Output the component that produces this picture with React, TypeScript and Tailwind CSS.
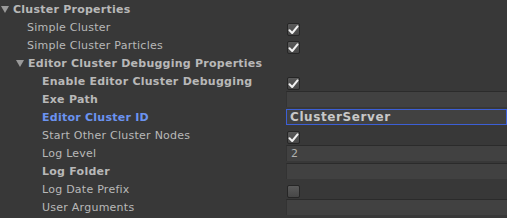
import React from "react"

type Row = {
  label: string
  indent: number
  bold?: boolean
  foldout?: boolean
  focused?: boolean
  kind?: "check" | "uncheck" | "text" | "none"
  value?: string
}

const rows: Row[] = [
  { label: "Cluster Properties", indent: 0, bold: true, foldout: true, kind: "none" },
  { label: "Simple Cluster", indent: 1, kind: "check" },
  { label: "Simple Cluster Particles", indent: 1, kind: "check" },
  { label: "Editor Cluster Debugging Properties", indent: 1, bold: true, foldout: true, kind: "none" },
  { label: "Enable Editor Cluster Debugging", indent: 2, bold: true, kind: "check" },
  { label: "Exe Path", indent: 2, bold: true, kind: "text", value: "" },
  { label: "Editor Cluster ID", indent: 2, bold: true, focused: true, kind: "text", value: "ClusterServer" },
  { label: "Start Other Cluster Nodes", indent: 2, kind: "check" },
  { label: "Log Level", indent: 2, kind: "text", value: "2" },
  { label: "Log Folder", indent: 2, bold: true, kind: "text", value: "" },
  { label: "Log Date Prefix", indent: 2, kind: "uncheck" },
  { label: "User Arguments", indent: 2, kind: "text", value: "" },
]

function Checkbox({ checked }: { checked: boolean }) {
  return (
    <div className="mt-[5px] ml-[1px] h-[13px] w-[13px] rounded-[2px] border border-[#262626] bg-gradient-to-b from-[#5a5a5a] to-[#474747] flex items-center justify-center">
      {checked && (
        <svg width="11" height="10" viewBox="0 0 11 10">
          <path d="M1.5 5.2 L4.2 8 L9.6 1.4" fill="none" stroke="#f2f2f2" strokeWidth="2" strokeLinecap="round" strokeLinejoin="round" />
        </svg>
      )}
    </div>
  )
}

function Field({ value, focused }: { value: string; focused?: boolean }) {
  return (
    <div
      className={
        focused
          ? "mt-[1px] h-[16px] flex-1 border border-[#3c5fd6] bg-[#414141] px-[3px] text-[12px] leading-[14px] tracking-[0.6px] text-[#c8c8c8] font-bold"
          : "mt-[1px] h-[16px] flex-1 border-t border-[#2b2b2b] border-l border-l-[#333] bg-[#414141] px-[4px] leading-[15px] text-[#b0b0b0]"
      }
    >
      {value}
    </div>
  )
}

export default function App() {
  return (
    <div className="w-[507px] h-[218px] overflow-hidden bg-[#383838] text-[11px] tracking-[0.25px] text-[#b8b8b8] font-['DejaVu_Sans',sans-serif]">
      {rows.map((r) => (
        <div key={r.label} className="flex h-[18px]">
          <div
            className={
              "flex w-[286px] shrink-0 items-center pt-[1px] " +
              (r.indent === 0 ? "pl-[1px]" : r.indent === 1 ? (r.foldout ? "pl-[16px]" : "pl-[27px]") : "pl-[42px]")
            }
          >
            {r.foldout && (
              <svg width="8" height="7" viewBox="0 0 8 7" className="mr-[4px]">
                <path d="M0 0 H8 L4 7 Z" fill="#9a9a9a" />
              </svg>
            )}
            <span
              className={
                (r.bold ? "font-bold " : "") +
                (r.focused ? "text-[#6b93f0]" : "") +
                " whitespace-nowrap leading-[17px]"
              }
            >
              {r.label}
            </span>
          </div>
          {r.kind === "check" && <Checkbox checked />}
          {r.kind === "uncheck" && <Checkbox checked={false} />}
          {r.kind === "text" && <Field value={r.value ?? ""} focused={r.focused} />}
        </div>
      ))}
    </div>
  )
}
